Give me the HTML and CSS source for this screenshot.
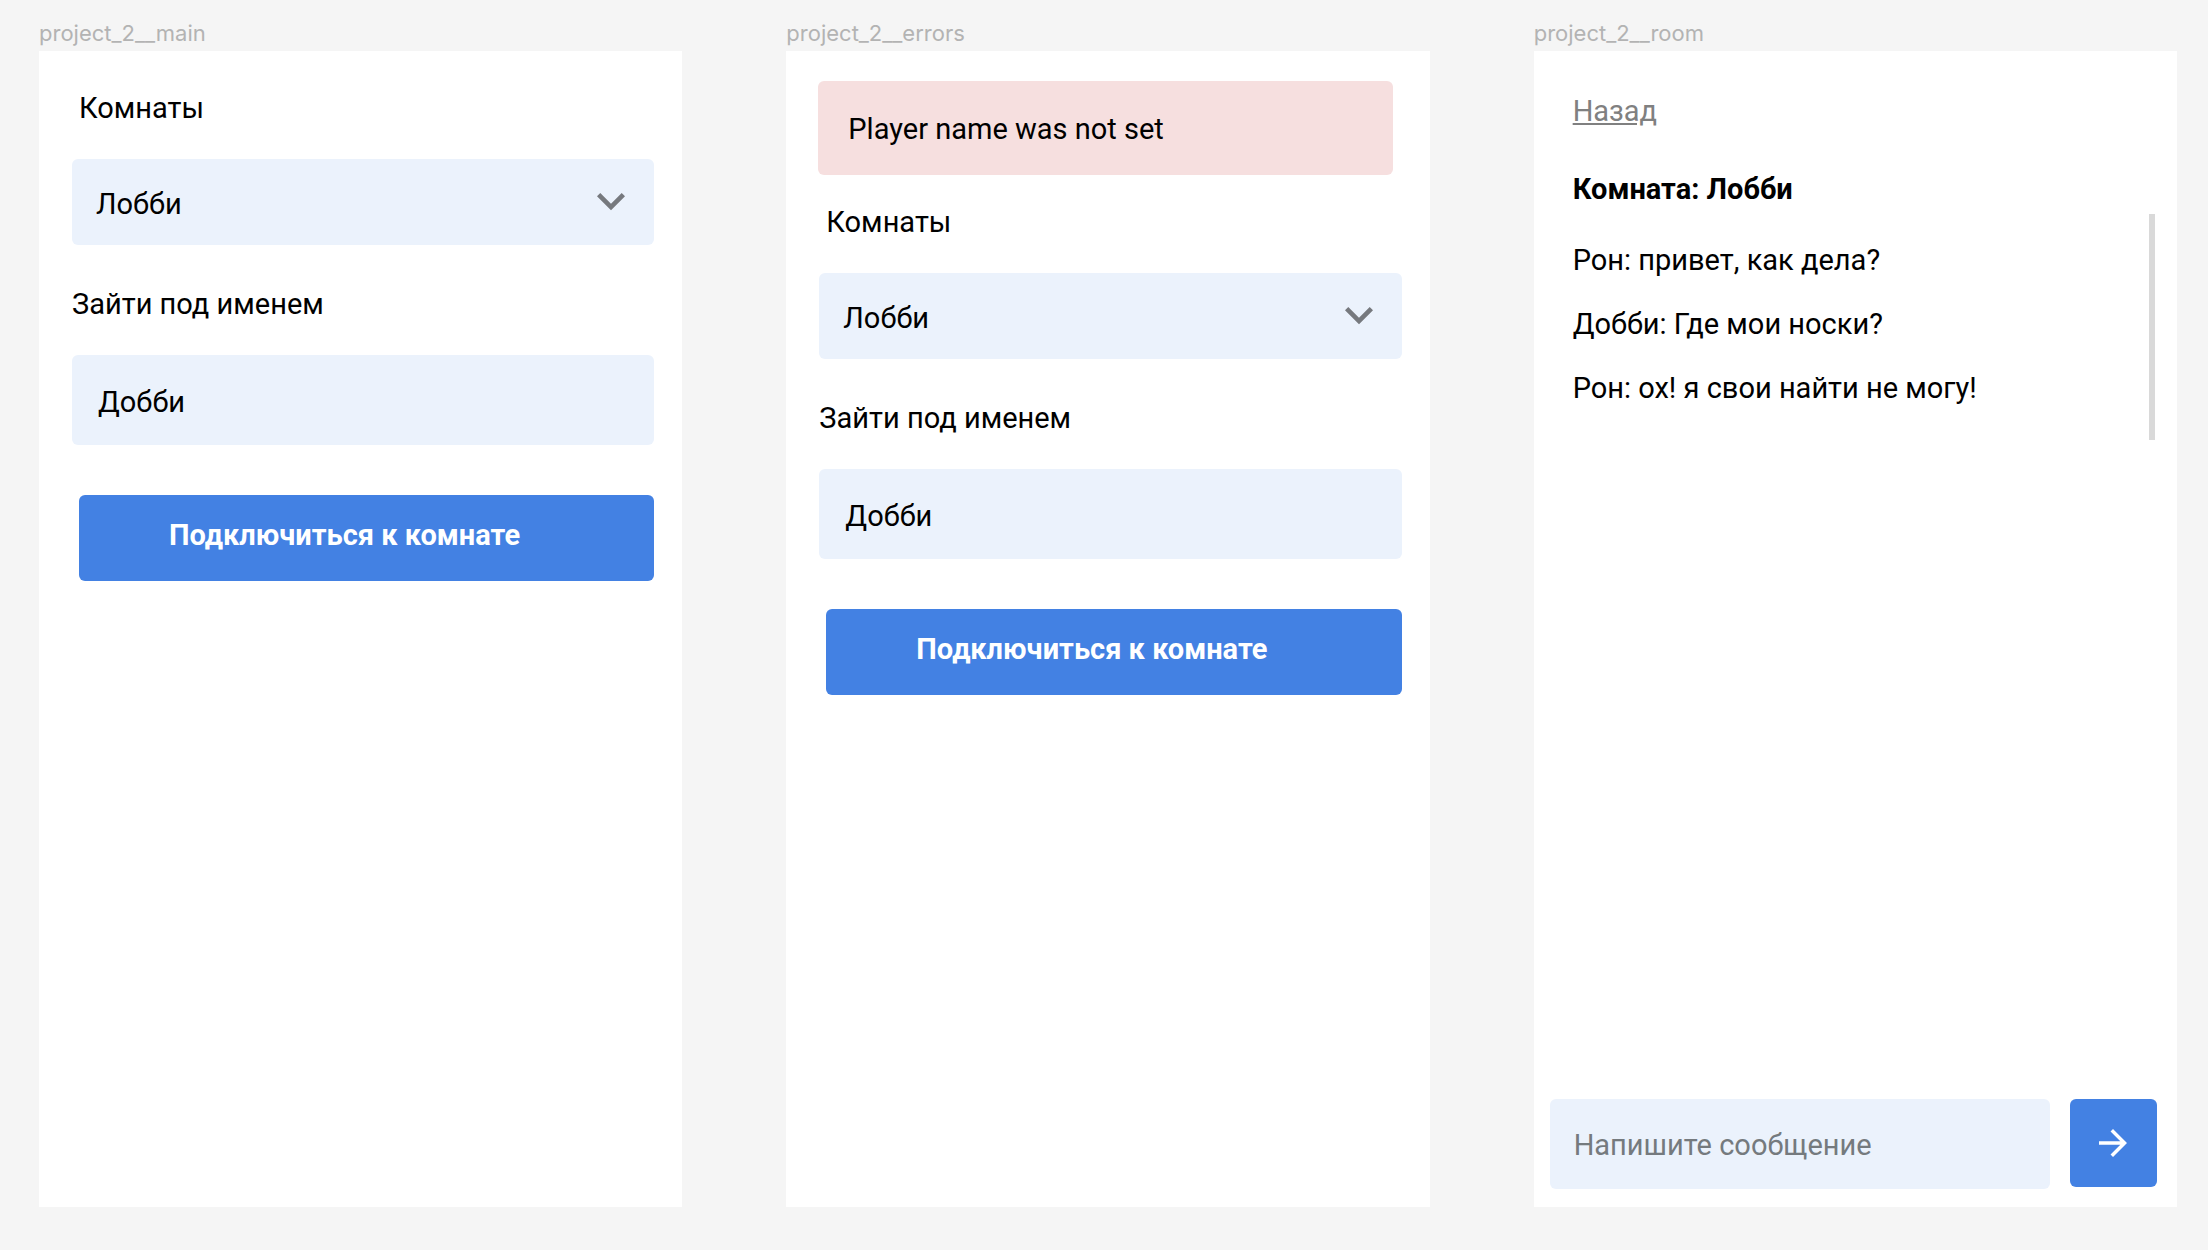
FILE: index.html
```html
<!DOCTYPE html>
<html lang="ru">
<head>
<meta charset="utf-8">
<meta name="viewport" content="width=device-width, initial-scale=1">
<title>project_2</title>
<link rel="stylesheet" href="styles.css">
</head>
<body>
<main class="board">
  <section class="frame">
    <h2 class="frame-name">project_2__main</h2>
    <form class="screen">
      <div class="form">
        <div class="field">
          <label class="label label-indent" for="room-main">Комнаты</label>
          <div class="select-wrap">
            <select class="control select" id="room-main"><option>Лобби</option></select>
            <svg class="chevron" viewBox="0 0 24 24" aria-hidden="true"><path d="M16.59 8.59L12 13.17 7.41 8.59 6 10l6 6 6-6z"/></svg>
          </div>
        </div>
        <div class="field">
          <label class="label" for="name-main">Зайти под именем</label>
          <input class="control input" id="name-main" type="text" value="Добби">
        </div>
        <button class="join" type="button">Подключиться к комнате</button>
      </div>
    </form>
  </section>

  <section class="frame">
    <h2 class="frame-name">project_2__errors</h2>
    <form class="screen screen-errors">
      <p class="alert" role="alert">Player name was not set</p>
      <div class="form">
        <div class="field">
          <label class="label label-indent" for="room-errors">Комнаты</label>
          <div class="select-wrap">
            <select class="control select" id="room-errors"><option>Лобби</option></select>
            <svg class="chevron" viewBox="0 0 24 24" aria-hidden="true"><path d="M16.59 8.59L12 13.17 7.41 8.59 6 10l6 6 6-6z"/></svg>
          </div>
        </div>
        <div class="field">
          <label class="label" for="name-errors">Зайти под именем</label>
          <input class="control input" id="name-errors" type="text" value="Добби">
        </div>
        <button class="join" type="button">Подключиться к комнате</button>
      </div>
    </form>
  </section>

  <section class="frame">
    <h2 class="frame-name">project_2__room</h2>
    <div class="screen screen-room">
      <a class="back" href="#">Назад</a>
      <h1 class="room-title">Комната: Лобби</h1>
      <div class="chat">
        <ul class="messages">
          <li>Рон: привет, как дела?</li>
          <li>Добби: Где мои носки?</li>
          <li>Рон: ох! я свои найти не могу!</li>
        </ul>
        <div class="scrollbar"></div>
      </div>
      <form class="composer">
        <input class="control input message-input" type="text" placeholder="Напишите сообщение" aria-label="Напишите сообщение">
        <button class="send" type="button" aria-label="Отправить">
          <svg class="arrow" viewBox="0 0 24 24" aria-hidden="true"><path d="M12 4l-1.41 1.41L16.17 11H4v2h12.17l-5.58 5.59L12 20l8-8z"/></svg>
        </button>
      </form>
    </div>
  </section>
</main>
</body>
</html>
```

FILE: styles.css
```css
* {
  box-sizing: border-box;
}

body {
  margin: 0;
  background: #f5f5f5;
  color: #000;
  font: 400 29px/36px Roboto, sans-serif;
}

h1,
h2,
p,
ul {
  margin: 0;
  padding: 0;
}

.board {
  display: grid;
  grid-template-columns: repeat(3, minmax(0, 1fr));
  gap: 104px;
  min-height: 100vh;
  padding: 17px 31px 43px 39px;
}

.frame {
  display: flex;
  flex-direction: column;
}

.frame-name {
  padding-bottom: 2px;
  color: #b3b3b3;
  font: 400 22px/32px Inter, sans-serif;
}

.screen {
  display: flex;
  flex: 1;
  flex-direction: column;
  padding-top: 39px;
  background: #fff;
}

.screen-errors {
  gap: 29px;
  padding-top: 30px;
}

.form {
  display: flex;
  flex-direction: column;
  padding: 0 28px 0 33px;
}

.field {
  display: flex;
  flex-direction: column;
  gap: 33px;
  margin-bottom: 41px;
}

.label-indent {
  padding-left: 7px;
}

.select-wrap {
  position: relative;
}

.control {
  display: block;
  width: 100%;
  margin: 0;
  border: 0;
  border-radius: 6px;
  background: #ebf2fc;
  color: #000;
  font: inherit;
}

.select {
  height: 86px;
  padding: 4px 80px 0 24px;
  appearance: none;
}

.chevron {
  position: absolute;
  top: 14px;
  right: 15px;
  width: 56px;
  height: 56px;
  fill: #76797e;
  pointer-events: none;
}

.input {
  height: 90px;
  padding: 4px 26px 0;
}

.join {
  height: 86px;
  margin: 9px 0 0 7px;
  padding: 0 90px 6px;
  border: 0;
  border-radius: 6px;
  background: #4381e3;
  color: #fff;
  font: inherit;
  font-weight: 700;
  text-align: left;
}

.alert {
  margin: 0 37px 0 32px;
  padding: 30px 30px 28px;
  border-radius: 6px;
  background: #f6dfdf;
}

.screen-room {
  padding-top: 42px;
}

.back {
  align-self: flex-start;
  margin-left: 39px;
  color: #808080;
}

.room-title {
  margin: 42px 39px 7px;
  font-size: 29px;
  line-height: 36px;
}

.chat {
  display: flex;
  justify-content: space-between;
  padding: 0 22px 0 39px;
}

.messages {
  display: flex;
  flex-direction: column;
  gap: 28px;
  padding: 28px 0 34px;
  list-style: none;
}

.scrollbar {
  width: 6px;
  background: #d9d9d9;
}

.composer {
  display: flex;
  gap: 20px;
  margin-top: auto;
  padding: 0 20px 18px 16px;
}

.message-input {
  flex: 1;
  min-width: 0;
  padding: 2px 24px 0;
}

.message-input::placeholder {
  color: #757a7e;
  opacity: 1;
}

.send {
  display: flex;
  flex: none;
  align-items: center;
  justify-content: center;
  width: 87px;
  height: 88px;
  padding: 0;
  border: 0;
  border-radius: 6px;
  background: #4381e3;
}

.arrow {
  width: 42px;
  height: 42px;
  fill: #fff;
}
```
